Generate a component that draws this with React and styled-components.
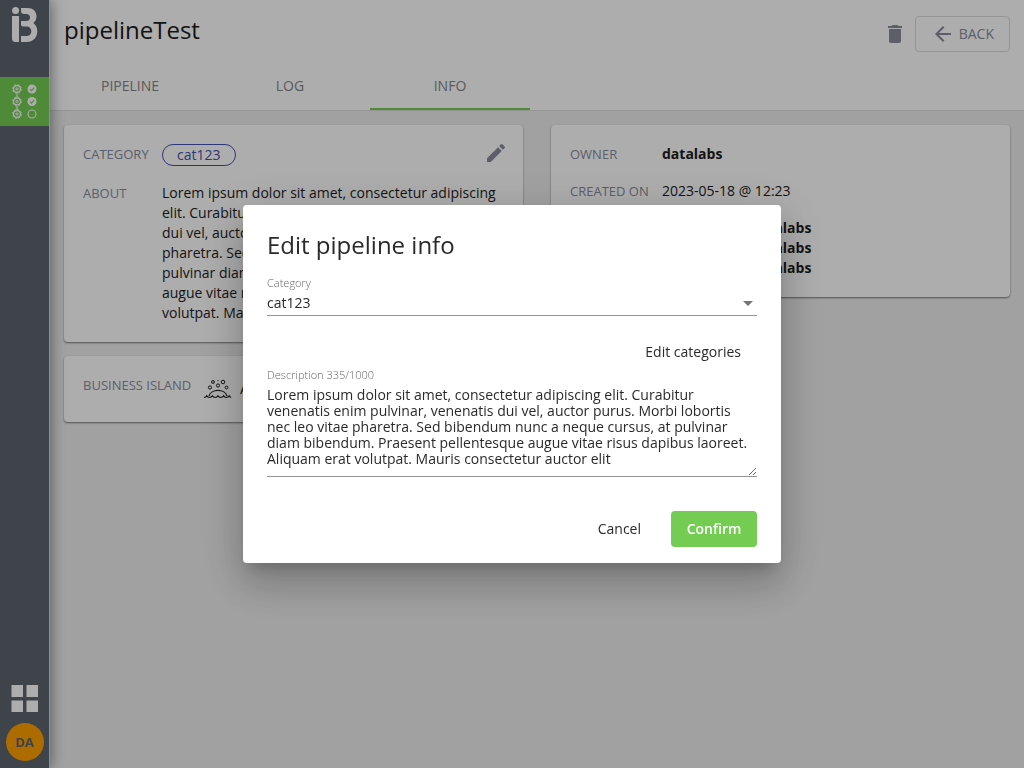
import React from "react";
import styled, { createGlobalStyle } from "styled-components";

const Global = createGlobalStyle`
  *, *::before, *::after { box-sizing: border-box; }
  body { margin: 0; font: 14px/20px "Open Sans", sans-serif; color: #1c1c1c; background: #eeeeee; }
  button, select, textarea { font: inherit; color: inherit; }
  h1, h2, p, dl, dd, dt { margin: 0; font-weight: 400; }
`;

const Shell = styled.div`
  display: flex;
  min-height: 100vh;
`;

const Sidebar = styled.aside`
  flex: none;
  display: flex;
  flex-direction: column;
  align-items: center;
  width: 50px;
  padding: 7px 0;
  border-right: 1px solid #d4d4d4;
  background: #5e636d;
  box-shadow: 0 0 14px rgba(0, 0, 0, 0.5);
  z-index: 1;
`;

const Home = styled.a`
  display: flex;
  height: 70px;
`;

const NavLink = styled.a`
  display: flex;
  align-items: center;
  justify-content: center;
  width: 49px;
  height: 49px;
  background: #75cc53;
`;

const AppsButton = styled.button`
  display: flex;
  margin-top: auto;
  margin-bottom: 10px;
  padding: 0;
  border: 0;
  background: none;
`;

const Avatar = styled.button`
  width: 38px;
  height: 38px;
  padding: 0;
  border: 0;
  border-radius: 50%;
  background: #ff9f00;
  color: #5e636d;
  font-size: 13px;
  font-weight: 700;
`;

const Main = styled.main`
  flex: 1;
  min-width: 0;
`;

const Header = styled.header`
  background: #fff;
  border-bottom: 1px solid #dcdcdc;
`;

const TitleRow = styled.div`
  display: flex;
  align-items: flex-start;
  justify-content: space-between;
  height: 62px;
  padding: 16px 14px 0;
`;

const Title = styled.h1`
  font-size: 24px;
  line-height: 28px;
`;

const Actions = styled.div`
  display: flex;
  align-items: center;
  gap: 8px;
`;

const IconButton = styled.button`
  display: flex;
  padding: 0;
  border: 0;
  background: none;
  color: #888c9c;
`;

const BackButton = styled.button`
  display: flex;
  align-items: center;
  gap: 4px;
  height: 36px;
  padding: 0 15px;
  border: 1px solid #dcdcdc;
  border-radius: 4px;
  background: none;
  color: #888c9c;
`;

const Tabs = styled.nav`
  display: flex;
`;

const Tab = styled.a`
  width: 160px;
  height: 48px;
  line-height: 48px;
  text-align: center;
  text-decoration: none;
  color: #858585;
  border-bottom: 2px solid ${(p) => (p.$active ? "#75cc53" : "transparent")};
`;

const Content = styled.div`
  display: grid;
  grid-template-columns: 1fr 1fr;
  align-items: start;
  gap: 28px;
  padding: 14px;
`;

const Column = styled.div`
  display: flex;
  flex-direction: column;
  gap: 14px;
`;

const Card = styled.section`
  display: flex;
  align-items: flex-start;
  padding: 19px;
  border-radius: 4px;
  background: #fff;
  box-shadow: 0 1px 2px rgba(0, 0, 0, 0.5);
`;

const Facts = styled.dl`
  flex: 1;
  display: grid;
  grid-template-columns: ${(p) => p.$label}px 1fr;
  row-gap: 17px;
`;

const Label = styled.dt`
  color: #888c9c;
  font-size: 13px;
`;

const Value = styled.dd`
  display: flex;
  align-items: flex-start;
`;

const Island = styled.dd`
  display: flex;
  align-items: center;
  gap: 8px;
  padding: 4px 0;
`;

const Chip = styled.span`
  padding: 0 14px;
  border: 1px solid #4450b4;
  border-radius: 11px;
  color: #4450b4;
`;

const Edit = styled(IconButton)`
  margin: -3px -4px -3px auto;
`;

const Revision = styled.p`
  display: grid;
  grid-template-columns: 89px auto;
  justify-content: start;
`;

const Backdrop = styled.div`
  position: fixed;
  inset: 0;
  z-index: 2;
  display: flex;
  align-items: center;
  justify-content: center;
  background: rgba(0, 0, 0, 0.32);
`;

const Dialog = styled.form`
  display: flex;
  flex-direction: column;
  width: 538px;
  padding: 24px 24px 16px;
  border-radius: 4px;
  background: #fff;
  color: #2a2a2a;
  box-shadow: 0 11px 15px -7px rgba(0, 0, 0, 0.2), 0 24px 38px 3px rgba(0, 0, 0, 0.14), 0 9px 46px 8px rgba(0, 0, 0, 0.12);
`;

const DialogTitle = styled.h2`
  margin-bottom: 14px;
  font-size: 24px;
  line-height: 32px;
`;

const FieldLabel = styled.label`
  font-size: 11px;
  line-height: 16px;
  font-weight: 300;
  color: #666;
`;

const SelectBox = styled.div`
  display: flex;
  align-items: center;
  height: 25px;
  padding-right: 4px;
  border-bottom: 1px solid #949494;
`;

const Select = styled.select`
  flex: 1;
  padding: 0;
  border: 0;
  appearance: none;
  background: none;
  outline: 0;
`;

const Caret = styled.span`
  border: 5px solid transparent;
  border-top-color: #757575;
  border-bottom: 0;
`;

const Textarea = styled.textarea`
  height: 94px;
  padding: 4px 0 8px;
  border: 0;
  border-bottom: 1px solid #949494;
  line-height: 16px;
  background: none;
  outline: 0;
  resize: vertical;
`;

const DialogActions = styled.div`
  display: flex;
  justify-content: flex-end;
  gap: 14px;
  margin-top: 34px;
`;

const Button = styled.button`
  height: 36px;
  padding: 0 16px;
  border: 0;
  border-radius: 4px;
  background: none;
`;

const PrimaryButton = styled(Button)`
  width: 86px;
  padding: 0;
  background: #75cc53;
  color: #fff;
  font-weight: 600;
`;

const EditCategories = styled(Button)`
  align-self: flex-end;
  margin: 18px 0 -3px;
`;

const Logo = () => (
  <svg width="26" height="36" viewBox="0 0 26 36" fill="#fff">
    <circle cx="3.6" cy="3.6" r="3.5" />
    <path d="M0 9h7v26H3.500Q0 35 0 31.500Z" />
    <path d="M9 1h6.500c5.500 0 9 3.500 9 8.200 0 3-1.300 5.300-3.200 6.800 2.500 1.800 4 4.500 4 8.200 0 6.500-4.500 10.800-10.500 10.800H9v-6h5.500c3 0 4.800-2 4.800-4.600 0-2.900-2-4.900-4.800-4.900H12c-1.500 0-2.500-.5-3-1.500v-4h5c2.500 0 4-1.300 4-3.300S16.500 7 14.500 7H12Q9 6.500 9 4Z" />
  </svg>
);

const Gear = ({ y }) => (
  <g transform={`translate(5 ${y})`} fill="none" stroke="#fff">
    <circle r="3.400" strokeWidth="1.200" />
    <circle r="4.400" strokeWidth="1" strokeDasharray="1.730 1.730" />
    <circle r="1.100" strokeWidth="1" />
  </g>
);

const PipelineIcon = () => (
  <svg width="26" height="38" viewBox="0 0 26 38">
    <path d="M5 10.500v4M5 23v4" stroke="#fff" strokeWidth="1.200" />
    <Gear y={6} />
    <Gear y={18.5} />
    <Gear y={31} />
    <circle cx="20" cy="6" r="4.500" fill="#fff" />
    <circle cx="20" cy="18.500" r="4.500" fill="#fff" />
    <circle cx="20" cy="31" r="4" fill="none" stroke="#fff" strokeWidth="1.100" />
    <path d="M18 6.200l1.500 1.400 2.700-3M18 18.700l1.500 1.400 2.700-3" fill="none" stroke="#75cc53" strokeWidth="1.100" />
  </svg>
);

const AppsIcon = () => (
  <svg width="28" height="28" viewBox="0 0 28 28" fill="#fff">
    <path d="M.5 0h11.500v12H.5zM15.500 0h11.500v12H15.500zM.5 15.500h11.500v11.500H.5zM15.500 15.500h11.500v11.500H15.500z" />
  </svg>
);

const IslandIcon = () => (
  <svg width="28" height="20" viewBox="0 0 28 20" fill="none" stroke="#1c1c1c">
    <path d="M5 17a9.200 7 0 0 1 18 0" strokeWidth="1.200" />
    <path d="M0 18.500q2-.2 2.800-1.700 1 1.700 2.800 1.700t2.800-1.700q1 1.700 2.800 1.700t2.800-1.700q1 1.700 2.800 1.700t2.800-1.700q1 1.700 2.800 1.700t2.800-1.700q1 1.700 2 1.700" strokeWidth="1.100" />
    <circle cx="14" cy="6.500" r="1.600" />
    <circle cx="6" cy="8.500" r="1.600" />
    <circle cx="22.500" cy="8.500" r="1.400" />
    <circle cx="19" cy="3" r="1.800" />
    <circle cx="9" cy="3" r="1.400" />
    <path d="M14 1v1" />
  </svg>
);

const Glyph = ({ d }) => (
  <svg width="24" height="24" viewBox="0 0 24 24" fill="currentColor">
    <path d={d} />
  </svg>
);

const TRASH = "M6 19c0 1.100.9 2 2 2h8c1.100 0 2-.9 2-2V7H6v12zM19 4h-3.500l-1-1h-5l-1 1H5v2h14V4z";
const BACK = "M20 11H7.830l5.590-5.590L12 4l-8 8 8 8 1.410-1.410L7.830 13H20v-2z";
const PENCIL = "M3 17.250V21h3.750L17.810 9.940l-3.750-3.750L3 17.250zM20.710 7.040a1 1 0 0 0 0-1.410l-2.340-2.340a1 1 0 0 0-1.410 0l-1.830 1.830 3.750 3.750 1.830-1.830z";

const ABOUT =
  "Lorem ipsum dolor sit amet, consectetur adipiscing elit. Curabitur venenatis enim pulvinar, venenatis dui vel, auctor purus. Morbi lobortis nec leo vitae pharetra. Sed bibendum nunc a neque cursus, at pulvinar diam bibendum. Praesent pellentesque augue vitae risus dapibus laoreet. Aliquam erat volutpat. Mauris consectetur auctor elit";

const REVISIONS = ["2023-05-18", "2023-05-18", "2023-05-18"];

export default function App() {
  return (
    <>
      <Global />
      <Shell>
        <Sidebar>
          <Home href="#" aria-label="Home"><Logo /></Home>
          <NavLink href="#" aria-label="Pipelines"><PipelineIcon /></NavLink>
          <AppsButton aria-label="Apps"><AppsIcon /></AppsButton>
          <Avatar>DA</Avatar>
        </Sidebar>
        <Main>
          <Header>
            <TitleRow>
              <Title>pipelineTest</Title>
              <Actions>
                <IconButton aria-label="Delete"><Glyph d={TRASH} /></IconButton>
                <BackButton><Glyph d={BACK} />BACK</BackButton>
              </Actions>
            </TitleRow>
            <Tabs>
              <Tab href="#">PIPELINE</Tab>
              <Tab href="#">LOG</Tab>
              <Tab href="#" $active>INFO</Tab>
            </Tabs>
          </Header>
          <Content>
            <Column>
              <Card>
                <Facts $label={79}>
                  <Label>CATEGORY</Label>
                  <Value><Chip>cat123</Chip><Edit aria-label="Edit"><Glyph d={PENCIL} /></Edit></Value>
                  <Label>ABOUT</Label>
                  <dd>{ABOUT}</dd>
                </Facts>
              </Card>
              <Card>
                <Facts $label={121}>
                  <Label>BUSINESS ISLAND</Label>
                  <Island><IslandIcon />Area</Island>
                </Facts>
              </Card>
            </Column>
            <Card>
              <Facts $label={92}>
                <Label>OWNER</Label>
                <dd><b>datalabs</b></dd>
                <Label>CREATED ON</Label>
                <dd>2023-05-18 @ 12:23</dd>
                <Label>EDITED ON</Label>
                <dd>
                  {REVISIONS.map((date, i) => (
                    <Revision key={i}><span>{date}</span><b>datalabs</b></Revision>
                  ))}
                </dd>
              </Facts>
            </Card>
          </Content>
        </Main>
      </Shell>
      <Backdrop>
        <Dialog role="dialog" aria-labelledby="dialog-title">
          <DialogTitle id="dialog-title">Edit pipeline info</DialogTitle>
          <FieldLabel htmlFor="category">Category</FieldLabel>
          <SelectBox>
            <Select id="category" defaultValue="cat123"><option>cat123</option></Select>
            <Caret />
          </SelectBox>
          <EditCategories type="button">Edit categories</EditCategories>
          <FieldLabel htmlFor="description">Description 335/1000</FieldLabel>
          <Textarea id="description" defaultValue={ABOUT} />
          <DialogActions>
            <Button type="button">Cancel</Button>
            <PrimaryButton type="button">Confirm</PrimaryButton>
          </DialogActions>
        </Dialog>
      </Backdrop>
    </>
  );
}
